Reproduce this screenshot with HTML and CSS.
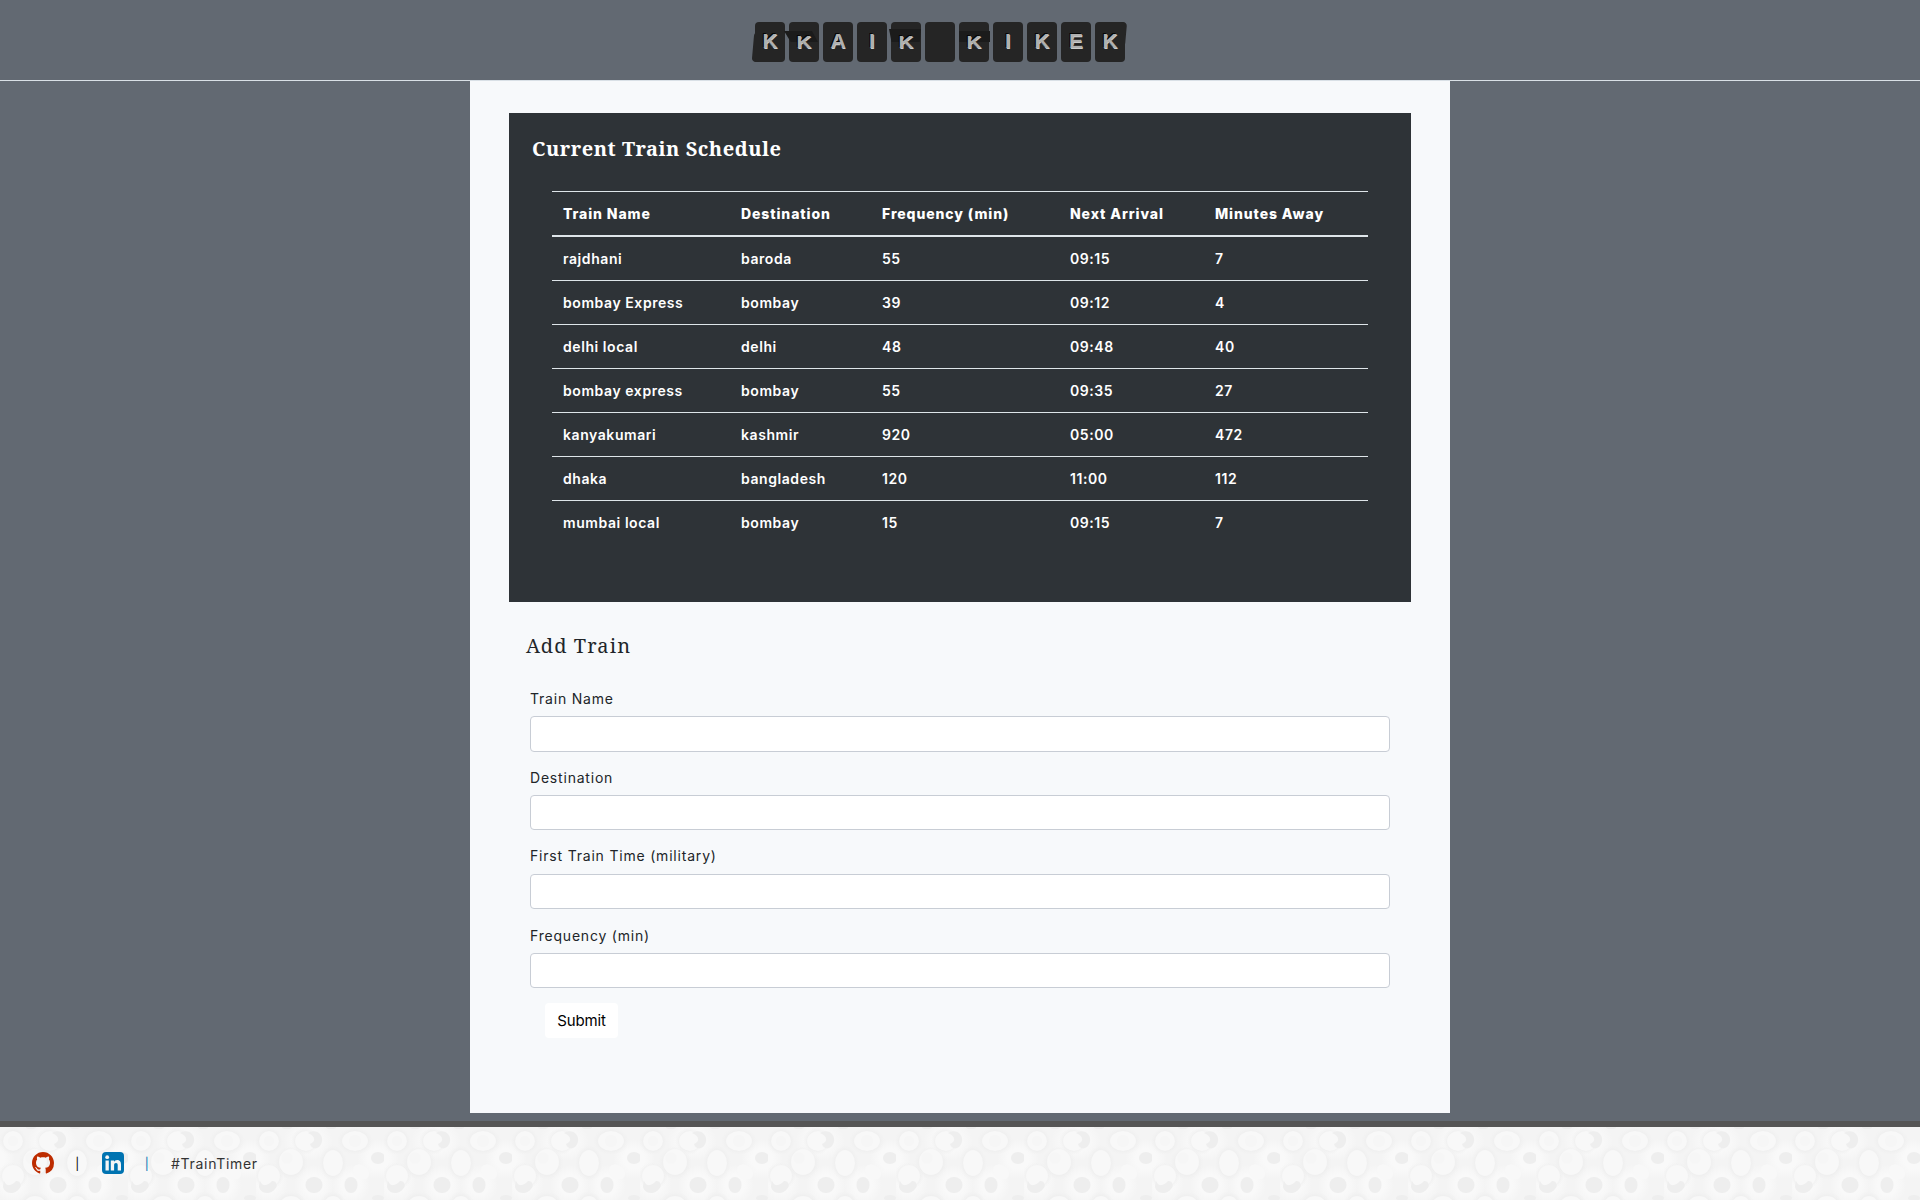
FILE: index.html
```html
<!DOCTYPE html>
<html lang="en">
<head>
<meta charset="utf-8">
<title>Train Timer</title>
<link rel="stylesheet" href="styles.css">
</head>
<body>
<header class="banner">
  <div class="board">
    <span class="flap lean-left">K</span><span class="flap folding fold-left"><b class="squash">K</b></span><span class="flap">A</span><span class="flap">I</span><span class="flap folding fold-up"><b class="squash">K</b></span><span class="flap"></span><span class="flap folding fold-mid"><b class="squash">K</b></span><span class="flap">I</span><span class="flap">K</span><span class="flap">E</span><span class="flap lean-right">K</span>
  </div>
</header>
<main class="page">
  <section class="schedule">
    <h2 class="schedule-title">Current Train Schedule</h2>
    <table class="trains">
      <colgroup><col class="c1"><col class="c2"><col class="c3"><col class="c4"><col class="c5"></colgroup>
      <thead><tr><th>Train Name</th><th>Destination</th><th>Frequency (min)</th><th>Next Arrival</th><th>Minutes Away</th></tr></thead>
      <tbody>
        <tr><td>rajdhani</td><td>baroda</td><td>55</td><td>09:15</td><td>7</td></tr>
        <tr><td>bombay Express</td><td>bombay</td><td>39</td><td>09:12</td><td>4</td></tr>
        <tr><td>delhi local</td><td>delhi</td><td>48</td><td>09:48</td><td>40</td></tr>
        <tr><td>bombay express</td><td>bombay</td><td>55</td><td>09:35</td><td>27</td></tr>
        <tr><td>kanyakumari</td><td>kashmir</td><td>920</td><td>05:00</td><td>472</td></tr>
        <tr><td>dhaka</td><td>bangladesh</td><td>120</td><td>11:00</td><td>112</td></tr>
        <tr><td>mumbai local</td><td>bombay</td><td>15</td><td>09:15</td><td>7</td></tr>
      </tbody>
    </table>
  </section>
  <section class="add">
    <h2 class="add-title">Add Train</h2>
    <form class="form">
      <label class="field"><span class="label">Train Name</span><input class="input" type="text"></label>
      <label class="field"><span class="label">Destination</span><input class="input" type="text"></label>
      <label class="field"><span class="label">First Train Time (military)</span><input class="input" type="text"></label>
      <label class="field"><span class="label">Frequency (min)</span><input class="input" type="text"></label>
      <button class="submit" type="button">Submit</button>
    </form>
  </section>
</main>
<footer class="footer">
  <svg class="pattern" aria-hidden="true">
    <defs>
      <radialGradient id="halo"><stop offset="0.5" stop-color="#f9f9f9"/><stop offset="1" stop-color="#f9f9f9" stop-opacity="0"/></radialGradient>
      <radialGradient id="shade"><stop offset="0.6" stop-color="#ececec"/><stop offset="1" stop-color="#f1f1f1" stop-opacity="0"/></radialGradient>
      <pattern id="rings" width="128" height="128" patternUnits="userSpaceOnUse">
        <rect width="128" height="128" fill="#f4f4f4"/>
        <g fill="url(#halo)">
          <ellipse cx="52" cy="14" rx="25" ry="20"/><ellipse cx="122" cy="32" rx="21" ry="20"/><ellipse cx="-6" cy="32" rx="21" ry="20"/>
          <ellipse cx="58" cy="58" rx="20" ry="20"/><ellipse cx="95" cy="58" rx="19" ry="20"/><ellipse cx="12" cy="56" rx="20" ry="20"/>
        </g>
        <g fill="url(#shade)">
          <ellipse cx="13" cy="14" rx="14" ry="14"/><ellipse cx="99" cy="14" rx="18" ry="14"/><ellipse cx="49" cy="14" rx="14" ry="14"/>
          <ellipse cx="35" cy="36" rx="17" ry="17"/><ellipse cx="77" cy="36" rx="14" ry="18"/><ellipse cx="13" cy="49" rx="15" ry="14"/>
          <ellipse cx="35" cy="80" rx="17" ry="16"/><ellipse cx="77" cy="80" rx="14" ry="16"/>
        </g>
        <g fill="#f8f8f8">
          <ellipse cx="13" cy="14" rx="10" ry="10"/><ellipse cx="99" cy="14" rx="13" ry="10"/><ellipse cx="50" cy="14" rx="11" ry="10"/>
          <ellipse cx="35" cy="35" rx="12" ry="13"/><ellipse cx="77" cy="36" rx="10" ry="13"/><ellipse cx="13" cy="49" rx="11" ry="11"/>
          <ellipse cx="105" cy="45" rx="9" ry="7" transform="rotate(35 105 45)"/><ellipse cx="35" cy="80" rx="12" ry="11"/><ellipse cx="77" cy="80" rx="10" ry="11"/>
        </g>
        <g fill="#eee">
          <path d="M52 6c8-5 15 1 14 8-1 8-10 10-12 3 6-2 6-8-2-11z"/>
          <path d="M4 54c2 6 8 5 12 0 5 0 6 5 3 8-5 7-16 4-16-3z"/>
          <ellipse cx="122" cy="31" rx="7" ry="6"/><ellipse cx="58" cy="58" rx="8.500" ry="8"/><ellipse cx="95" cy="58" rx="6.500" ry="8"/>
          <ellipse cx="31" cy="0" rx="5" ry="2"/><ellipse cx="75" cy="0" rx="5" ry="2"/><ellipse cx="122" cy="71" rx="6" ry="3"/>
        </g>
        <g fill="#f6f6f6"><circle cx="31" cy="31" r="5.500"/><circle cx="13" cy="14" r="5"/><circle cx="99" cy="14" r="6"/></g>
      </pattern>
    </defs>
    <rect width="100%" height="100%" fill="url(#rings)"/>
  </svg>
  <nav class="links">
    <svg class="github" viewBox="0 0 16 16"><path fill="#bd2c00" d="M8 0C3.580 0 0 3.580 0 8c0 3.540 2.290 6.530 5.470 7.590.4.070.55-.17.55-.38 0-.19-.01-.82-.01-1.490-2.010.37-2.530-.49-2.690-.94-.09-.23-.48-.94-.82-1.130-.28-.15-.68-.52-.01-.53.63-.01 1.080.58 1.230.82.72 1.210 1.870.87 2.330.66.070-.52.28-.87.51-1.070-1.780-.2-3.640-.89-3.640-3.950 0-.87.31-1.590.82-2.150-.08-.2-.36-1.020.08-2.120 0 0 .67-.21 2.200.82.64-.18 1.320-.27 2-.27s1.360.09 2 .27c1.530-1.040 2.200-.82 2.200-.82.44 1.100.16 1.920.08 2.120.51.56.82 1.270.82 2.150 0 3.070-1.870 3.750-3.650 3.950.29.25.54.73.54 1.480 0 1.070-.01 1.930-.01 2.200 0 .21.15.46.55.38A8.010 8.010 0 0 0 16 8c0-4.420-3.580-8-8-8z"/></svg>
    <span class="bar">|</span>
    <svg class="linkedin" viewBox="0 0 22 22"><rect width="22" height="22" rx="4" fill="#0073b1"/><g fill="#f6f6f6"><circle cx="5.200" cy="5.200" r="1.900"/><path d="M3.500 8.400h3.300v10.200H3.500zM8.800 8.400H12v1.500c.7-1.100 1.700-1.800 3.200-1.800 2.600 0 3.800 1.700 3.800 4.500v6h-3.300v-5.400c0-1.500-.5-2.300-1.700-2.300-1.300 0-1.900.9-1.900 2.300v5.400H8.800z"/></g></svg>
    <span class="bar blue">|</span>
    <span class="tag">#TrainTimer</span>
  </nav>
</footer>
</body>
</html>
```

FILE: styles.css
```css
* { box-sizing: border-box; }
body { margin: 0; height: 1200px; overflow: hidden; display: flex; flex-direction: column; background: #626972; color: #212529; font-family: Inter, "Noto Sans", sans-serif; font-size: 14px; letter-spacing: 0.8px; }
.banner { height: 81px; flex: none; border-bottom: 1px solid #d9e0e6; padding: 22px 0 0 755px; }
.board { display: flex; gap: 4px; }
.flap { position: relative; width: 30px; height: 40px; border-radius: 4px; background: #252525; color: #b0b0b0; font: bold 21px/38px "Liberation Sans", sans-serif; letter-spacing: 0; text-align: center; text-shadow: -1px -1px 0 #050505, 0.5px 0.5px 0 #ccc; }
.lean-left::before, .lean-right::before { content: ""; position: absolute; z-index: -1; background: #252525; border-radius: 4px; }
.lean-left::before { left: -2px; top: 10px; width: 20px; height: 30px; transform: skewX(-5deg); }
.lean-right::before { right: -1px; top: 0; width: 20px; height: 25px; transform: skewX(-5deg); }
.folding { isolation: isolate; }
.folding::after { content: ""; position: absolute; z-index: -1; background: #1b1b1b; }
.squash { display: block; transform: scaleY(0.8); transform-origin: 50% 70%; }
.fold-left::after { left: -5px; top: 9px; width: 34px; height: 11px; clip-path: polygon(0 0, 82% 0, 100% 100%, 20% 100%); }
.fold-up::after { left: -2px; top: 7px; width: 32px; height: 13px; clip-path: polygon(0 0, 100% 0, 96% 100%, 8% 100%); }
.fold-mid::after { left: 0; top: 9px; width: 31px; height: 11px; }
.page { width: 980px; height: 1032px; flex: none; margin: 0 auto; padding: 32px 39px; background: #f7f9fb; }
.schedule { height: 489px; padding: 20px 43px 0; background: #2e3337; color: #fff; }
h2 { margin: 0; font-family: "Noto Serif", "DejaVu Serif", serif; }
.schedule-title { height: 58px; margin-left: -20px; padding-top: 1px; font-size: 20px; line-height: 30px; letter-spacing: 0.52px; }
.trains { width: 816px; table-layout: fixed; border-collapse: separate; border-spacing: 0; }
.c1 { width: 178px; } .c2 { width: 141px; } .c3 { width: 188px; } .c4 { width: 145px; } .c5 { width: 164px; }
.trains th, .trains td { height: 44px; padding: 0 11px; border-top: 1px solid #dee5e9; text-align: left; font-weight: 600; line-height: 21px; letter-spacing: 0.57px; white-space: nowrap; }
.trains th { height: 46px; border-bottom: 2px solid #dee5e9; font-weight: 800; letter-spacing: 0.9px; }
.trains tbody tr:first-child td { height: 43px; border-top: 0; }
.add { padding: 29px 21px 0; }
.add-title { height: 60px; margin-left: -4px; font-size: 20px; line-height: 30px; font-weight: 400; letter-spacing: 1.1px; }
.form { display: flex; flex-direction: column; margin-top: -1px; }
.field { display: flex; flex-direction: column; height: 79px; }
.field:nth-child(3) .label { height: 27px; margin-top: -1px; }
.label { height: 26px; line-height: 17px; }
.input { height: 35px; border: 1px solid #c8cdd5; border-radius: 4px; background: #fff; }
.field:first-child .input { height: 36px; }
.submit { align-self: flex-start; width: 73px; height: 35px; margin: -3px 0 0 15px; padding: 0; border: 0; border-radius: 4px; background: #fff; color: #000; font: 15px Inter, sans-serif; letter-spacing: -0.15px; }
.footer { position: relative; height: 79px; flex: none; margin-top: 8px; border-top: 6px solid #555; }
.pattern { position: absolute; inset: 0; width: 100%; height: 100%; }
.links { position: relative; display: flex; align-items: center; height: 72px; padding-left: 32px; }
.github, .linkedin { width: 22px; height: 22px; }
.bar { width: 47.500px; text-align: center; color: #000; font-size: 12px; }
.blue { color: #0073b1; }
.tag { color: #333; letter-spacing: 0.7px; }
```
